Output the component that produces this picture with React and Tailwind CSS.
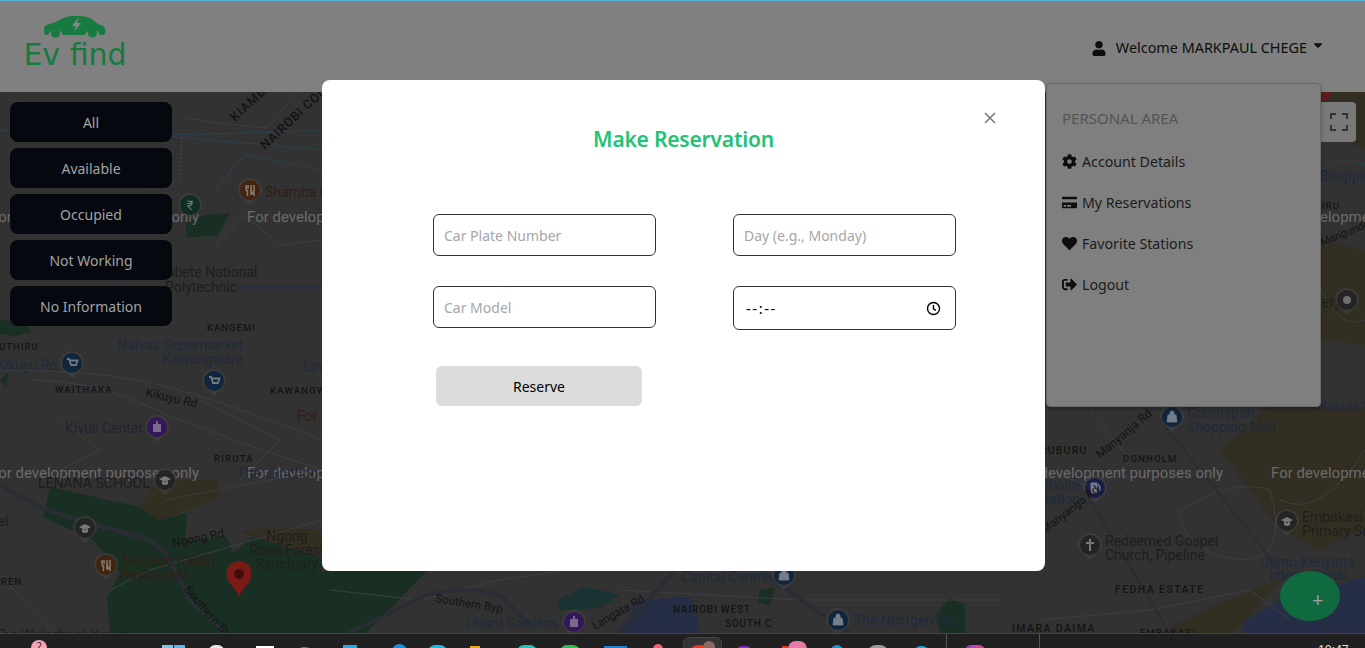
import React from "react";
import { FaUser, FaCog, FaCreditCard, FaHeart, FaSignOutAlt, FaCaretDown } from "react-icons/fa";

const ui = "font-['Noto_Sans','Open_Sans',sans-serif]";

function Pin({ x, y, c, g }) {
  return (
    <g transform={`translate(${x} ${y})`}>
      <path d="M-12 0a12 12 0 1 1 24 0c0 6-6 9-12 15c-6-6-12-9-12-15z" fill="#424242" opacity="0.6" />
      <circle r="10" fill={c} />
      {g === "cart" && <path d="M-5-4h2l2 6h5l1.500-4.500h-7.500M-1 4.500h.01M3.500 4.500h.01" fill="none" stroke="#6f7a84" strokeWidth="1.800" />}
      {g === "food" && <path d="M-4-5v4q0 2 1.500 2v5M-2-5v4M1-5v10M4-5v10q-3-3-3-6" fill="none" stroke="#8f7d6d" strokeWidth="1.500" />}
      {g === "school" && <path d="M-6-1l6-3 6 3-6 3zM-3 1v3q3 2 6 0v-3" fill="#787878" />}
      {g === "temple" && <path d="M-4-3h8v8h-8zM-1-6h2v3h-2z" fill="#7b6a8c" />}
      {g === "bag" && <path d="M-4-2h8l1 7h-10zM-2-2v-2a2 2 0 0 1 4 0v2" fill="#747d88" stroke="#747d88" strokeWidth="0.800" />}
      {g === "gas" && <path d="M-4-5h6v10h-6zM3-4l2 2v5" fill="#777b90" stroke="#777b90" />}
      {g === "cross" && <path d="M-1-6h2v3h3v2h-3v7h-2v-7h-3v-2h3z" fill="#787878" />}
      {g === "dot" && <circle r="4" fill="#6e6e6e" />}
      {g === "rupee" && <text x="0" y="5" fontSize="13" fill="#6c7c76" textAnchor="middle">₹</text>}
    </g>
  );
}

function T({ x, y, s = 14, c = "#1f2a3c", r, a = "start", w = 400, ls, children }) {
  return (
    <text x={x} y={y} fontSize={s} fill={c} textAnchor={a} fontWeight={w} letterSpacing={ls}
      transform={r ? `rotate(${r} ${x} ${y})` : undefined}>{children}</text>
  );
}

function MapArt() {
  const wm = "#6b6b6b";
  const blue = "#1f2a3c";
  const brown = "#301f16";
  const dark = "#141414";
  const grey = "#1e1e1e";
  const pBlue = "#10263c";
  const pFood = "#412410";
  const pPurple = "#341758";
  const pGrey = "#242424";
  const green = "#1a2f23";
  const tan = "#332e22";
  return (
    <svg className="absolute inset-0 h-full w-full" viewBox="0 92 1365 541" style={{ fontFamily: "Roboto, sans-serif" }}>
      <rect x="0" y="92" width="1365" height="541" fill="#323232" />
      {/* land use */}
      <path d="M50 487L140 507 160 520 187 513 185 540 227 537 233 553 253 537 322 557V633H110L107 597 120 573 93 540 43 517Z" fill={green} />
      <path d="M140 507L157 480 217 480 220 497 187 510 160 520Z" fill={tan} />
      <path d="M240 532L267 527 322 530V557L253 537Z" fill={tan} />
      <path d="M186 222L205 215 230 213 218 235 186 238Z" fill={green} />
      <path d="M0 320L25 322 32 332 15 336 0 334Z" fill={green} />
      <path d="M0 380L8 372 6 388Z" fill={green} />
      <path d="M1220 450L1267 407H1365V527L1320 550 1280 530Z" fill={tan} />
      <path d="M1215 605L1280 580 1245 622 1230 633H1160Z" fill={tan} />
      <path d="M1321 92H1365V150L1321 130ZM1321 240L1365 250V345L1321 340Z" fill={tan} />
      <path d="M1243 633V622L1280 600 1365 577V633Z" fill="#252e46" />
      <path d="M618 633L640 600 692 597 700 633Z" fill="#252e46" />
      <path d="M557 600L585 587 620 595 600 608 560 610Z" fill="#1b3232" />
      <path d="M322 571H427L366 633H322Z" fill={green} />
      <path d="M760 590L775 588 770 605 758 602Z" fill={green} />
      <path d="M935 615L950 598 965 605 965 633 940 633Z" fill={green} />
      {/* minor roads */}
      <g fill="none" stroke="#3b3f43" strokeWidth="1">
        <path d="M215 245L245 215 280 245 322 240" />
        <path d="M0 370Q100 370 160 385T322 440" />
        <path d="M30 380Q90 380 145 405T322 470" />
        <path d="M60 420L100 450 60 470M200 400L280 440 240 480" />
        <path d="M165 500L322 470" />
        <path d="M0 575L60 640M110 590L150 570 322 520" />
        <path d="M1090 410L1130 460 1100 490 1045 470" />
        <path d="M1200 500Q1240 480 1270 490 1290 560 1240 560 1180 550 1180 510Z" />
        <path d="M1280 500Q1320 520 1365 450" />
        <path d="M1321 290Q1340 330 1365 320" />
        <path d="M1040 620L1150 610 1250 590 1290 620" />
        <path d="M330 590L420 600 500 580 560 571M620 590L800 600 1000 600" />
      </g>
      <g fill="none" stroke="#29404b" strokeWidth="1.200">
        <path d="M0 130Q100 140 322 130" />
        <path d="M10 100L120 132 322 150" />
        <path d="M215 190L245 155 322 170" />
        <path d="M1321 170Q1340 155 1365 165" />
      </g>
      <g fill="none" stroke="#2a2d34" strokeWidth="4">
        <path d="M0 485Q40 510 85 522T150 540L165 552 190 600 225 633" />
        <path d="M348 633L380 618 427 595Q470 585 501 596L530 625" />
        <path d="M674 571L641 608 622 633" />
        <path d="M762 571L832 622 850 633" />
        <path d="M1160 420L1330 633" strokeWidth="2" />
        <path d="M1090 500L1170 633" strokeWidth="2.500" />
      </g>
      <path d="M238 287H322" stroke="#262e3a" strokeWidth="3" />
      {/* dotted county line */}
      <path d="M295 95L267 128 217 123 180 117M182 133L180 180 150 190" fill="none" stroke="#474747" strokeDasharray="2 2" />

      {/* watermarks */}
      <g fill={wm} fontSize="15">
        <text x="-10" y="222">For development purposes only</text>
        <text x="247" y="222">For development purposes only</text>
        <text x="-10" y="478">For development purposes only</text>
        <text x="247" y="478">For development purposes only</text>
        <text x="1014" y="478">For development purposes only</text>
        <text x="1271" y="478">For development purposes only</text>
        <text x="1271" y="222">For development purposes only</text>
      </g>

      {/* left labels */}
      <T x="235" y="122" c={dark} r="-43" s="12.500" w="500" ls="1">KIAMBU</T>
      <T x="265" y="150" c={dark} r="-43" s="12.500" w="500" ls="0.800">NAIROBI COUNTY</T>
      <Pin x="250" y="190" c={pFood} g="food" />
      <T x="265" y="197" c={brown}>Shamba Centre</T>
      <Pin x="190" y="205" c="#112c22" g="rupee" />
      <T x="158" y="277" c={grey}>Kabete National</T>
      <T x="165" y="292" c={grey}>Polytechnic</T>
      <T x="207" y="331" c={dark} s="9.500" w="500" ls="1">KANGEMI</T>
      <T x="243" y="350" c={blue} a="end">Naivas Supermarket</T>
      <T x="243" y="364" c={blue} a="end">- Kawangware</T>
      <T x="-4" y="370" c={blue}>Kikuyu Rd</T>
      <Pin x="72" y="363" c={pBlue} g="cart" />
      <Pin x="214" y="381" c={pBlue} g="cart" />
      <T x="-8" y="350" c={dark} s="9.500" w="500" ls="1">KUTHIRU</T>
      <T x="55" y="393" c={dark} s="9.500" w="500" ls="1.200">WAITHAKA</T>
      <T x="145" y="396" c={dark} s="12" r="13">Kikuyu Rd</T>
      <T x="270" y="394" c={dark} s="9.500" w="500" ls="1.200">KAWANGWARE</T>
      <T x="303" y="371" c={blue}>Lavington</T>
      <T x="297" y="421" c={brown}>For</T>
      <T x="65" y="433" c="#252232">Kivuli Center</T>
      <Pin x="157" y="427" c={pPurple} g="temple" />
      <T x="214" y="462" c={dark} s="9.500" w="500" ls="1.200">RIRUTA</T>
      <T x="38" y="488" c={grey}>LENANA SCHOOL</T>
      <T x="237" y="478" c={blue}>The Junction</T>
      <Pin x="165" y="480" c={pGrey} g="school" />
      <T x="-25" y="526" c={grey}>Hotel</T>
      <Pin x="85" y="528" c={pGrey} g="school" />
      <T x="173" y="547" c={dark} s="12" r="-11">Ngong Rd</T>
      <T x="287" y="541" c={grey} a="middle">Ngong</T>
      <T x="287" y="555" c={grey} a="middle">Road Forest</T>
      <T x="287" y="569" c={grey} a="middle">Sanctuary</T>
      <Pin x="106" y="565" c={pFood} g="food" />
      <T x="121" y="565" c={brown}>Matteo's Italian</T>
      <T x="121" y="579" c={brown}>Restaurant</T>
      <path d="M239 561c7 0 12.500 5.500 12.500 13 0 9-9 13-12.500 23-3.500-10-12.500-14-12.500-23 0-7.500 5.500-13 12.500-13z" fill="#7c1a16" />
      <circle cx="239" cy="574" r="5" fill="#440d0d" />
      <T x="183" y="590" c={dark} s="12" r="48">Southern Byp</T>
      <T x="-14" y="585" c={dark} s="9.500" w="500" ls="1.200">KAREN</T>
      <T x="-6" y="640" c={grey}>The Waterfront Karen</T>

      {/* bottom labels */}
      <T x="435" y="602" c={dark} s="11.500" r="9">Southern Byp</T>
      <T x="466" y="628" c={blue}>Uhuru Gardens</T>
      <Pin x="574" y="622" c={pPurple} g="temple" />
      <T x="595" y="630" c={dark} s="11.500" r="-30">Langata Rd</T>
      <T x="681" y="582" c={blue}>Capital Centre</T>
      <Pin x="784" y="575" c={pBlue} g="bag" />
      <T x="673" y="613" c={dark} s="10" w="500" ls="0.800">NAIROBI WEST</T>
      <T x="725" y="627" c={dark} s="10" w="500" ls="0.800">SOUTH C</T>
      <Pin x="838" y="620" c={pBlue} g="bag" />
      <T x="854" y="625" c={blue}>The Nextgen Mall</T>

      {/* right labels */}
      <path d="M1317 92h14v3q-3 4-7 7q-4-3-7-7z" fill="#5e1c1c" />
      <T x="1320" y="181" c={blue}>Shopping</T>
      <T x="1322" y="209" c={dark} s="9.500" w="500" ls="1">IRU</T>
      <T x="1322" y="246" c={dark} s="11" r="-22">Mangundo Rd</T>
      <T x="1298" y="307" c={grey}>Gallery</T>
      <Pin x="1347" y="300" c={pGrey} g="dot" />
      <T x="1317" y="411" c={blue}>Naivas South</T>
      <Pin x="1172" y="417" c={pBlue} g="bag" />
      <T x="1187" y="418" c={blue}>Greenspan</T>
      <T x="1187" y="432" c={blue}>Shopping Mall</T>
      <T x="1024" y="454" c={dark} s="10.500" w="500" ls="1.200">BURUBURU</T>
      <T x="1100" y="459" c={dark} s="12" r="-40">Manyanja Rd</T>
      <T x="1123" y="462" c={dark} s="9.500" w="500" ls="1.200">DONHOLM</T>
      <T x="1080" y="490" c={blue} a="end">Donholm</T>
      <T x="1080" y="504" c={blue} a="end">Station</T>
      <Pin x="1095" y="488" c="#191e44" g="gas" />
      <T x="1045" y="534" c={dark} s="11.500" r="-38">Manyanga Rd</T>
      <Pin x="1090" y="545" c={pGrey} g="cross" />
      <T x="1105" y="546" c={grey}>Redeemed Gospel</T>
      <T x="1105" y="560" c={grey}>Church, Pipeline</T>
      <T x="1115" y="593" c={dark} s="10.500" w="500" ls="1.400">FEDHA ESTATE</T>
      <T x="1012" y="632" c={dark} s="10.500" w="500" ls="1.400">IMARA DAIMA</T>
      <T x="1140" y="636" c={dark} s="9.500" w="500" ls="1.200">EMBAKASI</T>
      <Pin x="1287" y="521" c={pGrey} g="school" />
      <T x="1302" y="522" c={grey}>Embakasi</T>
      <T x="1302" y="536" c={grey}>Primary School</T>
      <T x="1308" y="567" c={blue} a="middle">Jomo Kenyatta</T>
      <T x="1308" y="580" c={blue} a="middle">International</T>
    </svg>
  );
}

function Logo() {
  return (
    <div className="ml-[24px] flex w-[102px] flex-col items-center">
      <svg width="64" height="25" viewBox="0 0 64 25" className="mt-[13px] ml-[-1px]">
        <path d="M1 15c0-3 3-5 9-6 5-1 10-7 20-7 9 0 16 0 21 5 3 3 8 4 10 6 2 3 2 6 0 8H57a8 8 0 0 0-15 0H20a8 8 0 0 0-15 0H3c-2-1-2-4-2-6z" fill="#167a41" />
        <circle cx="12.500" cy="19" r="4.500" fill="#167a41" />
        <circle cx="49.500" cy="19" r="4.500" fill="#167a41" />
        <path d="M36 3l-7 9h4l-2 6 7-9h-4z" fill="#888888" />
      </svg>
      <div className="font-['DejaVu_Sans',sans-serif] text-[30px] leading-[32px] whitespace-nowrap text-[#167a41]">Ev find</div>
    </div>
  );
}

function Header() {
  return (
    <header className={`flex h-[92px] shrink-0 items-start justify-between border-t border-[#5db1d4] bg-[#808080] ${ui}`}>
      <Logo />
      <div className="mt-[38px] mr-[42px] flex h-[18px] items-center text-[14.400px] text-[#0d0d0d]">
        <FaUser className="mr-[10px] h-[15px] w-[14px]" />
        <span>Welcome MARKPAUL CHEGE</span>
        <FaCaretDown className="mt-[-6px] ml-[6px] h-[14px] w-[10px]" />
      </div>
    </header>
  );
}

function Filters() {
  const items = ["All", "Available", "Occupied", "Not Working", "No Information"];
  return (
    <div className={`absolute top-[10px] left-[10px] flex w-[162px] flex-col gap-[6px] ${ui}`}>
      {items.map((t) => (
        <button key={t} className="h-[40px] rounded-lg bg-[#05080e] text-[14px] text-[#a3a3a3]">{t}</button>
      ))}
    </div>
  );
}

function Fullscreen() {
  return (
    <div className="absolute top-[10px] left-[1321px] flex h-[40px] w-[35px] items-center justify-center rounded-r-sm bg-[#797979]">
      <svg width="18" height="18" viewBox="0 0 18 18" fill="none" stroke="#333333" strokeWidth="2">
        <path d="M1 6V1h5M12 1h5v5M17 12v5h-5M6 17H1v-5" />
      </svg>
    </div>
  );
}

function Menu() {
  const rows = [
    [FaCog, "Account Details"],
    [FaCreditCard, "My Reservations"],
    [FaHeart, "Favorite Stations"],
    [FaSignOutAlt, "Logout"],
  ];
  return (
    <div className={`absolute top-[83px] left-[1046px] h-[324px] w-[275px] rounded-[4px] border border-[#6a6a6a] bg-[#7f7f7f] px-[15px] pt-[24px] shadow-[0_2px_4px_rgba(0,0,0,0.3)] ${ui}`}>
      <div className="text-[15px] leading-[20px] text-[#545454]">PERSONAL AREA</div>
      <div className="mt-[13px] flex flex-col">
        {rows.map(([I, t]) => (
          <div key={t} className="flex h-[41px] items-center text-[14.200px] text-[#1c1c1c]">
            <span className="flex w-[20px] shrink-0"><I className="h-[15px] w-[15px] text-[#0d0d0d]" /></span>
            <span>{t}</span>
          </div>
        ))}
      </div>
    </div>
  );
}

function Field({ placeholder }) {
  return (
    <input
      placeholder={placeholder}
      readOnly
      className="h-[42px] w-[223px] rounded-md border border-[#333333] bg-white px-[10px] text-[14px] outline-none placeholder:text-[#a6a6a6]"
    />
  );
}

function Modal() {
  return (
    <div className={`absolute top-[80px] left-[322px] h-[491px] w-[723px] rounded-lg bg-white pt-[33px] ${ui}`}>
      <div className="relative">
        <h2 className="text-center text-[21px] leading-[52px] font-semibold tracking-[-0.2px] text-[#22c373]">Make Reservation</h2>
        <button className="absolute top-[-2px] left-[661px] text-[#777777]" aria-label="Close">
          <svg width="14" height="14" viewBox="0 0 14 14" stroke="currentColor" strokeWidth="1.500"><path d="M2 2l10 10M12 2L2 12" /></svg>
        </button>
      </div>
      <div className="mt-[49px] ml-[111px] grid w-[523px] grid-cols-[223px_223px] justify-between gap-y-[30px]">
        <Field placeholder="Car Plate Number" />
        <Field placeholder="Day (e.g., Monday)" />
        <Field placeholder="Car Model" />
        <div className="flex h-[44px] w-[223px] items-center justify-between rounded-md border border-[#333333] pr-[14px] pl-[12px] text-[15px] tracking-[1.500px] text-black">
          <span>--:--</span>
          <svg width="15" height="15" viewBox="0 0 15 15" fill="none" stroke="#000000" strokeWidth="1.400">
            <circle cx="7.500" cy="7.500" r="6" />
            <path d="M7.500 4v3.800l2.400 1.500" />
          </svg>
        </div>
      </div>
      <button className="mt-[36px] ml-[114px] block h-[40px] w-[206px] rounded-md bg-[#dcdcdc] text-[14px] text-black">Reserve</button>
    </div>
  );
}

function Taskbar() {
  return (
    <footer className="flex h-[15px] shrink-0 items-start overflow-hidden border-t border-[#444444] bg-[#202020]">
      <div className="mt-[6px] ml-[31px] flex h-[16px] w-[16px] justify-center rounded-full bg-[#f7a3b6] font-['Noto_Sans',sans-serif] text-[10px] leading-[12px] text-[#222222]">2</div>
      <div className="mt-[11px] ml-[115px] flex h-[8px] w-[23px] gap-[1px]"><div className="h-full flex-1 bg-[#7cc8ea]" /><div className="h-full flex-1 bg-[#5fb6e4]" /></div>
      <div className="mt-[11px] ml-[24px] h-[12px] w-[15px] rounded-full bg-[#e8e8e8]" />
      <div className="mt-[12px] ml-[32px] h-[8px] w-[18px] bg-white" />
      <div className="mt-[13px] ml-[25px] h-[8px] w-[11px] rounded-t-sm bg-[#1e80d8]" />
      <div className="mt-[11px] ml-[33px] h-[8px] w-[14px] bg-[#2aa6e8]" />
      <div className="mt-[10px] ml-[35px] h-[12px] w-[15px] rounded-t-lg bg-[#1c90d8]" />
      <div className="mt-[11px] ml-[21px] h-[14px] w-[19px] rounded-full bg-[#19b8e8]" />
      <div className="mt-[12px] ml-[23px] h-[8px] w-[10px] bg-[#e8a818]" />
      <div className="mt-[11px] ml-[37px] h-[14px] w-[20px] rounded-full bg-[#23c0c0]" />
      <div className="mt-[11px] ml-[23px] h-[14px] w-[20px] rounded-full bg-[#25c050]" />
      <div className="mt-[12px] ml-[24px] h-[8px] w-[23px] bg-[#1e80d0]" />
      <div className="mt-[10px] ml-[26px] h-[10px] w-[10px] rounded-t-full bg-[#f06070]" />
      <div className="mt-[3px] ml-[20px] flex h-[14px] w-[39px] items-start justify-center rounded-t-md border border-[#444444] bg-[#333333]">
        <div className="mt-[7px] h-[8px] w-[13px] rounded-tl-lg bg-[#e83820]" />
        <div className="mt-[3px] h-[12px] w-[12px] rounded-t-full bg-[#8a6a60]" />
      </div>
      <div className="mt-[12px] ml-[14px] h-[12px] w-[16px] rounded-full bg-[#8030c0]" />
      <div className="mt-[7px] ml-[30px] flex h-[12px] w-[25px] items-start">
        <div className="mt-[5px] h-[8px] w-[6px] bg-[#e83820]" />
        <div className="h-[16px] w-[19px] rounded-full bg-[#e87aa8]" />
      </div>
      <div className="mt-[11px] ml-[24px] h-[8px] w-[12px] rounded-t-full bg-[#1898e0]" />
      <div className="mt-[11px] ml-[25px] h-[8px] w-[20px] rounded-t-full bg-[#999999]" />
      <div className="mt-[12px] ml-[25px] h-[8px] w-[17px] rounded-t-lg bg-[#18a8e8]" />
      <div className="ml-[16px] h-full w-[1px] bg-[#555555]" />
      <div className="mt-[11px] ml-[18px] h-[8px] w-[20px] rounded-t-md bg-gradient-to-r from-[#7a3fe0] to-[#f0305a]" />
      <div className="ml-[54px] h-full w-[1px] bg-[#555555]" />
      <div className="mt-[8px] ml-[278px] font-['Noto_Sans',sans-serif] text-[12px] leading-[16px] text-[#e0e0e0]">10:47</div>
    </footer>
  );
}

export default function App() {
  return (
    <div className="relative flex h-[648px] w-[1365px] flex-col overflow-hidden bg-[#323232]">
      <Header />
      <main className="relative flex-1 overflow-hidden">
        <MapArt />
        <Filters />
        <Fullscreen />
        <div className={`absolute top-[479px] left-[1280px] h-[50px] w-[60px] rounded-[50%] bg-[#0f6b3f] pt-[14px] pl-[32px] text-[20px] leading-[30px] text-[#a0a0a0] ${ui}`}>+</div>
      </main>
      <Taskbar />
      <Menu />
      <Modal />
    </div>
  );
}
